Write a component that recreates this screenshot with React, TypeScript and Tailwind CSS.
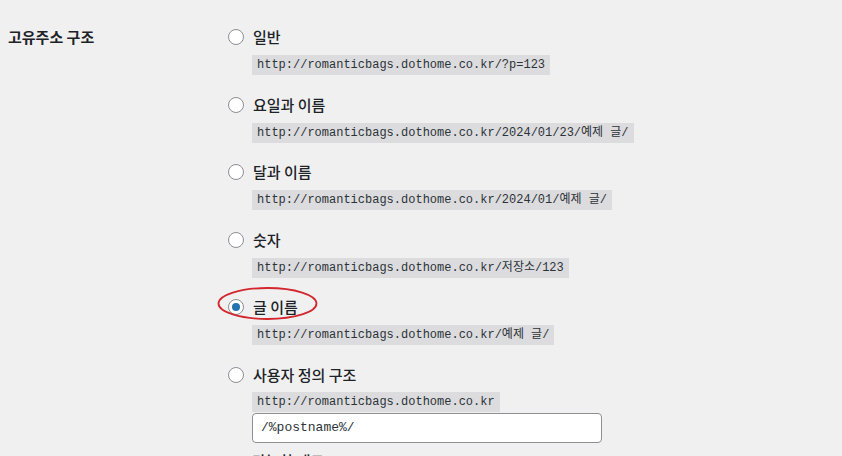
import React from "react";

const rows: { label: string; url: string; checked?: boolean }[] = [
  { label: "일반", url: "http://romanticbags.dothome.co.kr/?p=123" },
  { label: "요일과 이름", url: "http://romanticbags.dothome.co.kr/2024/01/23/예제 글/" },
  { label: "달과 이름", url: "http://romanticbags.dothome.co.kr/2024/01/예제 글/" },
  { label: "숫자", url: "http://romanticbags.dothome.co.kr/저장소/123" },
  { label: "글 이름", url: "http://romanticbags.dothome.co.kr/예제 글/", checked: true },
];

const sans = { fontFamily: '"Noto Sans CJK KR", "Noto Sans", sans-serif' };
const mono = { fontFamily: '"Liberation Mono", "Noto Sans CJK KR", monospace' };

function Radio({ checked }: { checked?: boolean }) {
  return (
    <span className="flex h-4 w-4 shrink-0 items-center justify-center rounded-full border border-[#8c8f94] bg-white">
      {checked && <span className="h-2 w-2 rounded-full bg-[#2271b1]" />}
    </span>
  );
}

export default function App() {
  return (
    <div className="h-[456px] w-[842px] overflow-hidden bg-[#f0f0f1] text-[#1d2327]" style={sans}>
      <div className="flex pl-2 pt-[25px]">
        <div className="w-[220px] shrink-0 text-[15px] font-semibold leading-6">고유주소 구조</div>
        <div className="flex flex-col">
          {rows.map((r) => (
            <div key={r.label} className="relative mb-[17.5px] flex flex-col">
              <div className="flex h-6 items-center gap-[9px]">
                <Radio checked={r.checked} />
                <span className="text-[15px] font-medium leading-6">{r.label}</span>
              </div>
              {r.checked && (
                <svg className="absolute left-[-11px] top-[-9px]" width="102" height="36" viewBox="0 0 102 36">
                  <ellipse cx="50.5" cy="17.5" rx="49" ry="15.5" fill="none" stroke="#d3262d" strokeWidth="1.8" />
                </svg>
              )}
              <div className="ml-6 mt-[6px] flex">
                <code className="h-5 whitespace-pre bg-[#dcdcde] px-[5px] text-[12px] leading-5 text-[#2c3338]" style={mono}>
                  {r.url}
                </code>
              </div>
            </div>
          ))}
          <div className="flex flex-col">
            <div className="flex h-6 items-center gap-[9px]">
              <Radio />
              <span className="text-[15px] font-medium leading-6">사용자 정의 구조</span>
            </div>
            <div className="ml-6 mt-[5px] flex flex-col">
              <div className="flex">
                <code className="h-5 whitespace-pre bg-[#dcdcde] px-[5px] text-[12px] leading-5 text-[#2c3338]" style={mono}>
                  http://romanticbags.dothome.co.kr
                </code>
              </div>
              <input
                readOnly
                value="/%postname%/"
                className="mt-px h-[30px] w-[350px] rounded-[4px] border border-[#8c8f94] bg-white px-2 text-[13px] text-[#2c3338] outline-none"
                style={mono}
              />
              <div className="mt-[6px] text-[15px] font-medium leading-6">가능한 태그:</div>
            </div>
          </div>
        </div>
      </div>
    </div>
  );
}
